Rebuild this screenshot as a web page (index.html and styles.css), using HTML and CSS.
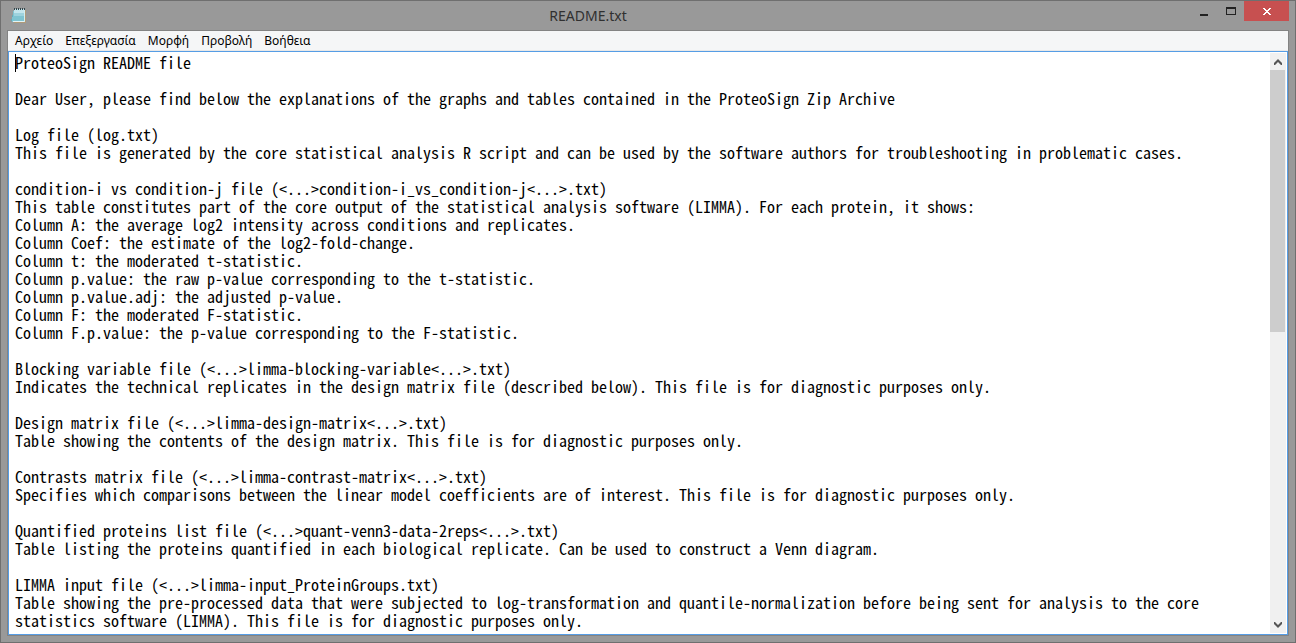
FILE: index.html
```
<!DOCTYPE html>
<html lang="el">
<head>
<meta charset="utf-8">
<meta name="viewport" content="width=device-width, initial-scale=1">
<title>README.txt</title>
<link rel="stylesheet" href="styles.css">
</head>
<body>
<main class="window">
  <header class="titlebar">
    <svg class="app-icon" viewBox="0 0 16 16" width="16" height="16" aria-hidden="true" shape-rendering="crispEdges">
      <path d="M3 2H15V15H3Z" fill="#b09a78"/>
      <path d="M3 1L0 13H3Z" fill="#68a9b5"/>
      <path d="M2 3H14V14H1V9H2Z" fill="#7fc4d1"/>
      <path d="M3 1H14V5H3Z" fill="#c4e6ed"/>
      <path d="M3 5H14V8H3Z" fill="#9ed3de"/>
      <path d="M2 13H14V14H2Z" fill="#e4f3f5"/>
      <path d="M13 2H14V14H13Z" fill="#d3edf1"/>
      <path d="M3 0H4V2H3ZM5 0H6V2H5ZM7 0H8V2H7ZM9 0H10V2H9ZM11 0H12V2H11ZM13 0H14V2H13Z" fill="#31454b"/>
    </svg>
    <h1 class="title">README.txt</h1>
    <div class="controls">
      <button class="control minimize" type="button" aria-label="Ελαχιστοποίηση"><svg width="8" height="8" viewBox="0 0 8 8" aria-hidden="true"><path d="M0 5H8V7H0Z" fill="#222"/></svg></button>
      <button class="control maximize" type="button" aria-label="Μεγιστοποίηση"><svg width="10" height="8" viewBox="0 0 10 8" aria-hidden="true" shape-rendering="crispEdges"><path fill-rule="evenodd" d="M0 0H10V8H0ZM1 2V7H9V2Z" fill="#222"/></svg></button>
      <button class="control close" type="button" aria-label="Κλείσιμο"><svg width="8" height="7" viewBox="0 0 8 7" aria-hidden="true" shape-rendering="crispEdges"><path d="M0 0H2V1H3V2H5V1H6V0H8V1H7V2H6V3H5V4H6V5H7V6H8V7H6V6H5V5H3V6H2V7H0V6H1V5H2V4H3V3H2V2H1V1H0Z" fill="#fff"/></svg></button>
    </div>
  </header>
  <div class="client">
    <nav class="menubar" aria-label="Μενού">
      <button class="menu" type="button">Αρχείο</button>
      <button class="menu" type="button">Επεξεργασία</button>
      <button class="menu" type="button">Μορφή</button>
      <button class="menu" type="button">Προβολή</button>
      <button class="menu" type="button">Βοήθεια</button>
    </nav>
    <div class="editor">
      <textarea class="document" aria-label="README.txt" spellcheck="false">ProteoSign README file

Dear User, please find below the explanations of the graphs and tables contained in the ProteoSign Zip Archive

Log file (log.txt)
This file is generated by the core statistical analysis R script and can be used by the software authors for troubleshooting in problematic cases.

condition-i vs condition-j file (&lt;...&gt;condition-i_vs_condition-j&lt;...&gt;.txt)
This table constitutes part of the core output of the statistical analysis software (LIMMA). For each protein, it shows:
Column A: the average log2 intensity across conditions and replicates.
Column Coef: the estimate of the log2-fold-change.
Column t: the moderated t-statistic.
Column p.value: the raw p-value corresponding to the t-statistic.
Column p.value.adj: the adjusted p-value.
Column F: the moderated F-statistic.
Column F.p.value: the p-value corresponding to the F-statistic.

Blocking variable file (&lt;...&gt;limma-blocking-variable&lt;...&gt;.txt)
Indicates the technical replicates in the design matrix file (described below). This file is for diagnostic purposes only.

Design matrix file (&lt;...&gt;limma-design-matrix&lt;...&gt;.txt)
Table showing the contents of the design matrix. This file is for diagnostic purposes only.

Contrasts matrix file (&lt;...&gt;limma-contrast-matrix&lt;...&gt;.txt)
Specifies which comparisons between the linear model coefficients are of interest. This file is for diagnostic purposes only.

Quantified proteins list file (&lt;...&gt;quant-venn3-data-2reps&lt;...&gt;.txt)
Table listing the proteins quantified in each biological replicate. Can be used to construct a Venn diagram.

LIMMA input file (&lt;...&gt;limma-input_ProteinGroups.txt)
Table showing the pre-processed data that were subjected to log-transformation and quantile-normalization before being sent for analysis to the core statistics software (LIMMA). This file is for diagnostic purposes only.</textarea>
      <span class="caret" aria-hidden="true"></span>
      <div class="scrollbar">
        <button class="arrow" type="button" aria-label="Κύλιση επάνω"><svg width="8" height="6" viewBox="0 0 8 6" aria-hidden="true"><path d="M4 0L8 4V6H7L4 3L1 6H0V4Z" fill="#555"/></svg></button>
        <div class="track"><div class="thumb"></div></div>
        <button class="arrow" type="button" aria-label="Κύλιση κάτω"><svg width="8" height="6" viewBox="0 0 8 6" aria-hidden="true"><path d="M4 6L0 2V0H1L4 3L7 0H8V2Z" fill="#555"/></svg></button>
      </div>
    </div>
  </div>
</main>
</body>
</html>
```

FILE: styles.css
```
* {
  box-sizing: border-box;
}

body {
  margin: 0;
  font-family: "Noto Sans", "Open Sans", sans-serif;
}

button {
  margin: 0;
  padding: 0;
  border: 0;
  background: none;
  color: inherit;
  font: inherit;
}

.window {
  display: flex;
  flex-direction: column;
  height: 100vh;
  padding: 0 6px 6px;
  border: 1px solid #6f6f6f;
  background: #999;
}

.titlebar {
  display: grid;
  grid-template-columns: 1fr auto 1fr;
  align-items: start;
  height: 29px;
}

.app-icon {
  margin: 7px 0 0 4px;
}

.title {
  margin: 5px 0 0;
  padding-right: 120px;
  color: #303030;
  font-size: 14px;
  font-weight: 400;
  line-height: 20px;
}

.controls {
  display: flex;
  justify-content: flex-end;
}

.control {
  display: flex;
  align-items: center;
  justify-content: center;
  width: 27px;
  height: 20px;
}

.minimize {
  padding-top: 4px;
}

.control.close {
  width: 45px;
  padding-top: 1px;
  background: #c75050;
}

.client {
  display: flex;
  flex: 1;
  flex-direction: column;
  min-height: 0;
  border: 1px solid #838383;
}

.menubar {
  display: flex;
  gap: 12px;
  height: 20px;
  padding: 0 7px;
  border-bottom: 1px solid #e8e8e8;
  background: #f5f6f7;
  font-size: 12px;
  line-height: 20px;
}

.editor {
  position: relative;
  display: flex;
  flex: 1;
  min-height: 0;
  padding: 1px 1px 1px 0;
  border: 1px solid #569de5;
  background: #fff;
}

.document {
  flex: 1;
  min-width: 0;
  margin: 0;
  padding: 0 6px;
  border: 0;
  outline: 0;
  resize: none;
  overflow: hidden;
  background: #fff;
  color: #000;
  font-family: "Noto Sans Mono CJK SC", "DejaVu Sans Mono", monospace;
  font-size: 16px;
  line-height: 18px;
}

.caret {
  position: absolute;
  top: 2px;
  left: 6px;
  width: 1px;
  height: 18px;
  background: #000;
}

.scrollbar {
  display: flex;
  flex-direction: column;
  width: 16px;
  background: #f0f0f0;
}

.arrow {
  display: flex;
  align-items: center;
  justify-content: center;
  height: 17px;
}

.track {
  flex: 1;
}

.thumb {
  width: 15px;
  height: 48%;
  background: #cdcdcd;
}
```
